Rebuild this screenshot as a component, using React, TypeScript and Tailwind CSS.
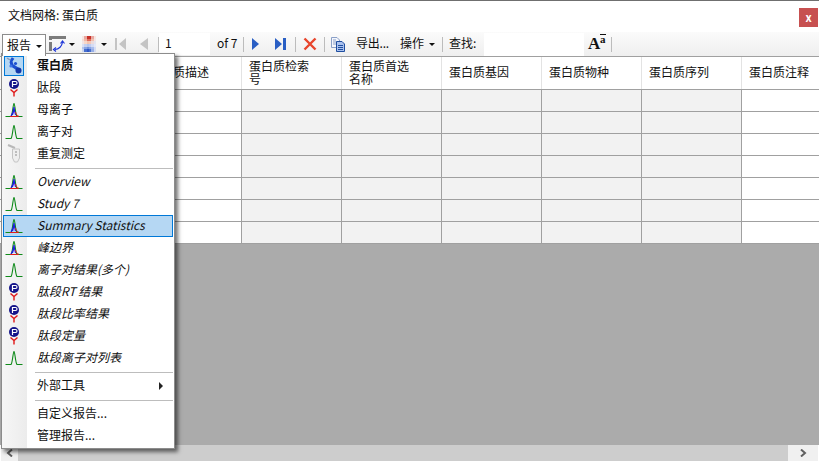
import React from "react";

const Peak = ({ multi }: { multi?: boolean }) => (
  <svg width="18" height="16" viewBox="0 0 18 16">
    <path d="M0.5 14.5 H6 C7.5 13.5 8 2 9 1.5 C10 2 10.5 13.5 12 14.5 H17.5" stroke="#0f8a1a" strokeWidth="1.1" fill="none" />
    {multi && <path d="M9 5 C8.5 9 7.5 12 6 14 M9 5 C9.5 9 10 11 10.5 13 M7.5 13 L9 8" stroke="#1c1ce0" strokeWidth="1.1" fill="none" />}
    {multi && <path d="M10.5 10 C11 12 12 13.5 14 14.5 M5 14.5 H13" stroke="#e01c1c" strokeWidth="1" fill="none" />}
  </svg>
);

const Pep = () => (
  <svg width="16" height="18" viewBox="0 0 16 18">
    <circle cx="8" cy="5" r="5" fill="#14148a" />
    <path d="M6.5 8 V2.5 H9.5 Q11 2.5 11 4 Q11 5.5 9.5 5.5 H6.5" stroke="#fff" strokeWidth="1.2" fill="none" />
    <path d="M4.5 10.5 L8 13.5 L11.5 10.5 M8 13.5 V17.5" stroke="#e01818" strokeWidth="1.4" fill="none" />
  </svg>
);

const Protein = () => (
  <svg width="18" height="18" viewBox="0 0 18 18">
    <path d="M2 1 L5 3" stroke="#8a9ab8" strokeWidth="1.5" />
    <path d="M6 1.5 L8.5 3 M5 4 C8 5 5 8 8 9 C10 10 11 11 14 13" stroke="#1c4fd0" strokeWidth="3.2" fill="none" />
    <circle cx="10.5" cy="6.5" r="1.6" fill="#1c4fd0" />
    <circle cx="13.5" cy="13.5" r="3" fill="#1236a8" />
    <circle cx="6" cy="9" r="1.6" fill="#3d74e8" />
  </svg>
);

const Tube = () => (
  <svg width="16" height="20" viewBox="0 0 16 20">
    <path d="M2 1 L9 4" stroke="#b8b8b8" strokeWidth="2" />
    <path d="M6.5 5 H13.5 V14 L11.5 18 H8.5 L6.5 14 Z" fill="#eeeeee" stroke="#c4c4c4" />
    <path d="M9 8 H11 M9 11 H11" stroke="#8c8c8c" strokeWidth="1" />
  </svg>
);

const Caret = () => (
  <span className="block w-0 h-0 border-x-[3px] border-x-transparent border-t-[3px] border-t-[#111]" />
);

const Sep = () => <span className="block w-px h-[15px] bg-[#bcbcbc]" />;

const heat = [
  ["#f6e6e2", "#e8a8a0", "#c83028", "#c83028", "#e8a8a0", "#f6e6e2"],
  ["#f6dcd4", "#f0b8a8", "#e07060", "#e07060", "#f0c0b0", "#f6e6e2"],
  ["#f2e4e4", "#f8d8c8", "#f4c4b0", "#f4c8b8", "#ecdcdc", "#e4e4f0"],
  ["#d8e0f4", "#c4d0f0", "#b4c4ec", "#c0ccf0", "#d4dcf4", "#e4e8f8"],
  ["#b4c4ec", "#88a4e4", "#7090dc", "#88a4e4", "#a8bcec", "#d4dcf4"],
  ["#c8d4f0", "#4870d0", "#3058c8", "#4870d0", "#98b0e8", "#d4dcf4"],
];

const Item = ({
  icon,
  label,
  bold,
  italic,
  active,
}: {
  icon?: React.ReactNode;
  label: string;
  bold?: boolean;
  italic?: boolean;
  active?: boolean;
}) => (
  <div
    className={`h-[22px] flex items-center shrink-0 mx-px border ${
      active ? "bg-[#b5d7f3] border-[#0078d7]" : "border-transparent"
    }`}
  >
    <span
      className={`w-[20px] h-[20px] flex items-center justify-center shrink-0 ${
        bold ? "bg-[#b5d7f3] border border-[#0078d7]" : ""
      }`}
    >
      {icon}
    </span>
    <span
      className={`ml-[13px] pb-[2px] whitespace-nowrap text-[12px] text-[#111] ${bold ? "font-bold" : ""} ${
        italic ? "italic" : ""
      }`}
    >
      {label}
    </span>
  </div>
);

const MenuSep = () => (
  <div className="h-[4px] my-[1px] pl-[33px] pr-[1px] flex items-center shrink-0">
    <div className="h-px w-full bg-[#bdbdbd]" />
  </div>
);

const headers = [
  "蛋白质描述",
  "蛋白质检索号",
  "蛋白质首选名称",
  "蛋白质基因",
  "蛋白质物种",
  "蛋白质序列",
  "蛋白质注释",
];

export default function App() {
  return (
    <div
      className="relative w-[819px] h-[463px] overflow-hidden bg-white flex flex-col border-t border-[#6f6f6f] text-[#111]"
      style={{ fontFamily: '"Noto Sans CJK SC", "Noto Sans", sans-serif' }}
    >
      {/* Title */}
      <div className="h-[31px] shrink-0 flex items-center justify-between pl-[8px] pr-[1px]">
        <span className="text-[12px] pb-[3px]">文档网格: 蛋白质</span>
        <span className="w-[19px] h-[19px] mt-[2px] bg-[#c75050] text-white text-[11px] font-bold flex items-center justify-center leading-none">
          x
        </span>
      </div>

      {/* Toolbar */}
      <div className="h-[25px] shrink-0 flex items-center bg-gradient-to-b from-[#fbfbfb] to-[#efefef] border-b border-[#a0a0a0] text-[12px] pl-[2px]">
        <span className="w-[44px] h-[22px] flex items-center gap-[5px] pl-[4px] pb-[2px] bg-white border border-[#8c8c8c] border-b-0 mt-[2px] z-20 shrink-0">
          报告
          <span className="mt-[3px]"><Caret /></span>
        </span>
        <svg className="ml-[3px] shrink-0" width="17" height="16" viewBox="0 0 17 16">
          <path d="M0 1.5 H17 M1.5 6 V15 M1.5 3 V4" stroke="#7c7c7c" strokeWidth="3" fill="none" />
          <path d="M6 13.5 C10 13.5 13 10 13.5 6" stroke="#1c34d8" strokeWidth="1.2" fill="none" />
          <path d="M11.5 7.5 L13.5 5 L15.5 7.5 M7 11.5 L4.5 13.5 L7 15.5" stroke="#1c34d8" strokeWidth="1.2" fill="none" />
        </svg>
        <span className="ml-[3px]"><Caret /></span>
        <span className="ml-[7px] w-[14px] h-[16px] shrink-0 grid grid-cols-6 grid-rows-6">
          {heat.flat().map((c, i) => (
            <span key={i} style={{ backgroundColor: c }} />
          ))}
        </span>
        <span className="ml-[5px]"><Caret /></span>
        <svg className="ml-[7px] shrink-0" width="14" height="14" viewBox="0 0 14 14">
          <path d="M1 1 H3 V13 H1 Z M12 1 V13 L5 7 Z" fill="#c4c4c4" />
        </svg>
        <svg className="ml-[10px] shrink-0" width="12" height="14" viewBox="0 0 12 14">
          <path d="M10 1 V13 L2 7 Z" fill="#c4c4c4" />
        </svg>
        <span className="ml-[8px]"><Sep /></span>
        <span className="w-[51px] h-[22px] bg-white pl-[6px] pb-[2px] flex items-center shrink-0">1</span>
        <span className="ml-[7px] w-[22px] pb-[2px] whitespace-nowrap shrink-0">of 7</span>
        <span className="ml-[4px]"><Sep /></span>
        <svg className="ml-[5px] shrink-0" width="12" height="14" viewBox="0 0 12 14">
          <path d="M3 1 V13 L10 7 Z" fill="#2a5fc4" />
        </svg>
        <svg className="ml-[13px] shrink-0" width="14" height="14" viewBox="0 0 14 14">
          <path d="M1 1 V13 L8 7 Z M9 1 H12 V13 H9 Z" fill="#2a5fc4" />
        </svg>
        <span className="ml-[7px]"><Sep /></span>
        <svg className="ml-[7px] shrink-0" width="14" height="14" viewBox="0 0 14 14">
          <path d="M1.5 1.5 L12.5 12.5 M12.5 1.5 L1.5 12.5" stroke="#e8452c" strokeWidth="2.4" fill="none" />
        </svg>
        <span className="ml-[7px]"><Sep /></span>
        <svg className="ml-[5px] shrink-0" width="16" height="16" viewBox="0 0 16 16">
          <path d="M1.5 1.5 H7 L9.5 4 V11.5 H1.5 Z" fill="#f4f6fc" stroke="#8aa0c8" />
          <path d="M3 4 H6 M3 6 H6 M3 8 H6" stroke="#8aa0c8" />
          <path d="M6.5 5.5 H12 L14.5 8 V15.5 H6.5 Z" fill="#a9c1ee" stroke="#1f4ea0" />
          <path d="M8 9.5 H13 M8 11.5 H13 M8 13.5 H13" stroke="#1f4ea0" strokeWidth="1" />
        </svg>
        <span className="ml-[10px] w-[34px] pb-[2px] whitespace-nowrap shrink-0 tracking-[-0.2px]">导出...</span>
        <span className="ml-[10px] w-[24px] pb-[2px] whitespace-nowrap shrink-0">操作</span>
        <span className="ml-[5px]"><Caret /></span>
        <span className="ml-[7px]"><Sep /></span>
        <span className="ml-[6px] w-[30px] pb-[2px] whitespace-nowrap shrink-0">查找:</span>
        <span className="ml-[5px] w-[100px] h-[23px] bg-white shrink-0" />
        <span
          className="ml-[4px] w-[20px] text-[#111] font-bold relative h-[20px] leading-none shrink-0"
          style={{ fontFamily: '"Liberation Serif", serif' }}
        >
          <span className="absolute left-0 bottom-[2px] text-[17px] leading-none">A</span>
          <span className="absolute left-[12px] top-0 h-[9px] text-[11px] leading-[8px] border-t border-[#111]">a</span>
        </span>
        <span className="ml-[3px]"><Sep /></span>
      </div>

      {/* Table */}
      <div className="flex flex-col shrink-0">
        <div className="h-[33px] flex border-b border-[#a0a0a0] text-[12px] leading-[13px] pl-[42px]">
          <div className="w-[100px] shrink-0 border-r border-[#e3e3e3]" />
          {headers.map((h) => (
            <div key={h} className="w-[100px] shrink-0 border-r border-[#e3e3e3] flex items-center pl-[7px] pr-[25px] pb-[3px]">
              {h}
            </div>
          ))}
        </div>
        {[0, 1, 2, 3, 4, 5, 6].map((r) => (
          <div key={r} className="h-[22px] flex border-b border-[#a0a0a0] pl-[42px]">
            <div className="w-[100px] shrink-0 border-r border-[#a0a0a0] bg-white" />
            {headers.map((h, i) => (
              <div
                key={h}
                className={`w-[100px] shrink-0 border-r border-[#a0a0a0] ${i === 0 || i === 6 ? "bg-white" : "bg-[#f2f2f2]"}`}
              />
            ))}
          </div>
        ))}
      </div>

      {/* Gray area */}
      <div className="flex-1 bg-[#ababab]" />

      {/* Scrollbar */}
      <div className="h-[16px] shrink-0 flex items-center bg-[#f0f0f0] mb-[2px] mx-px">
        <div className="w-[17px] flex justify-center">
          <svg width="8" height="8" viewBox="0 0 8 8"><path d="M6 0.5 L2 4 L6 7.5" stroke="#606060" strokeWidth="2" fill="none" /></svg>
        </div>
        <div className="w-[770px] h-full bg-[#cdcdcd]" />
        <div className="flex-1 flex justify-center">
          <svg width="8" height="8" viewBox="0 0 8 8"><path d="M2 0.5 L6 4 L2 7.5" stroke="#606060" strokeWidth="2" fill="none" /></svg>
        </div>
      </div>

      {/* Menu */}
      <div className="absolute left-[1px] top-[52px] w-[174px] h-[396px] z-10 bg-white border border-[#8c8c8c] shadow-[3px_3px_4px_rgba(0,0,0,0.55)] flex flex-col pt-px">
        <div className="absolute left-0 top-0 bottom-0 w-[25px] bg-gradient-to-r from-[#f6f6f6] to-[#ececec]" />
        <div className="relative flex flex-col">
          <Item icon={<Protein />} label="蛋白质" bold />
          <Item icon={<Pep />} label="肽段" />
          <Item icon={<Peak multi />} label="母离子" />
          <Item icon={<Peak />} label="离子对" />
          <Item icon={<Tube />} label="重复测定" />
          <MenuSep />
          <Item icon={<Peak multi />} label="Overview" italic />
          <Item icon={<Peak />} label="Study 7" italic />
          <Item icon={<Peak multi />} label="Summary Statistics" italic active />
          <Item icon={<Peak multi />} label="峰边界" italic />
          <Item icon={<Peak />} label="离子对结果(多个)" italic />
          <Item icon={<Pep />} label="肽段RT 结果" italic />
          <Item icon={<Pep />} label="肽段比率结果" italic />
          <Item icon={<Pep />} label="肽段定量" italic />
          <Item icon={<Peak />} label="肽段离子对列表" italic />
          <MenuSep />
          <div className="relative">
            <Item label="外部工具" />
            <span className="absolute right-[11px] top-[7px] w-0 h-0 border-y-[4px] border-y-transparent border-l-[4px] border-l-[#222]" />
          </div>
          <MenuSep />
          <Item label="自定义报告..." />
          <Item label="管理报告..." />
        </div>
      </div>
    </div>
  );
}
